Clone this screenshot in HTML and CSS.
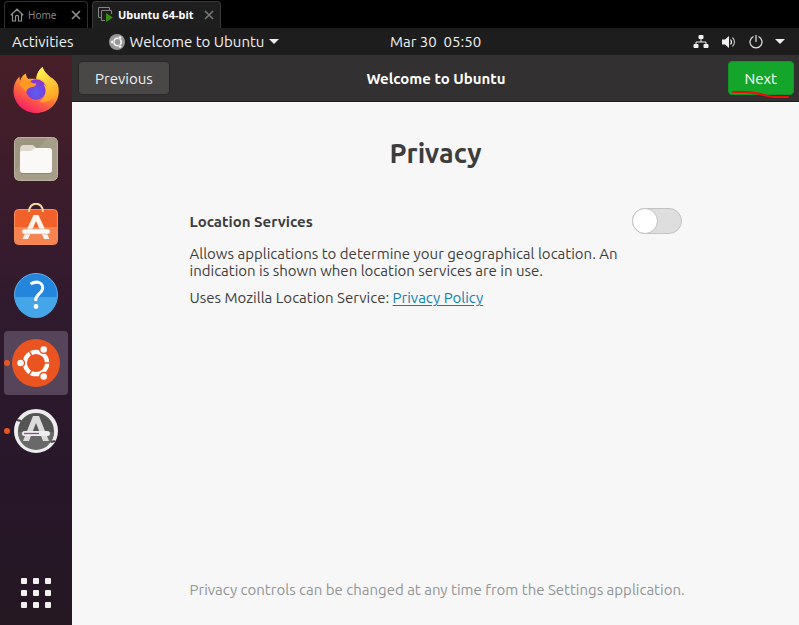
FILE: index.html
```html
<!DOCTYPE html>
<html lang="en">
<head>
<meta charset="utf-8">
<title>Welcome to Ubuntu</title>
<link rel="stylesheet" href="styles.css">
</head>
<body>
<nav class="tabs" aria-label="Virtual machines">
  <div class="tab">
    <svg width="14" height="14" viewBox="0 0 14 14" fill="none" stroke="#929292" stroke-width="1.2" aria-hidden="true"><path d="M.7 7.2 7 1.2l6.3 6M2.5 6v7h3V8.800a1.500 1.500 0 0 1 3 0V13h3V6"/></svg>
    <span class="tab-name">Home</span>
    <button class="close" aria-label="Close Home"><svg width="10" height="10" viewBox="0 0 10 10" stroke="#8c8c8c" stroke-width="1.700"><path d="m1 1 8 8M9 1 1 9"/></svg></button>
  </div>
  <div class="tab active">
    <svg width="16" height="16" viewBox="0 0 16 16" fill="none" stroke="#858585" aria-hidden="true"><path d="M3 10.500H.5V.5h11V3M7 13.500H3.500V3.500h10V7"/><path d="m8 6 7 4.500-7 4.500z" fill="#388e12" stroke="none"/></svg>
    <span class="tab-name">Ubuntu 64-bit</span>
    <button class="close" aria-label="Close Ubuntu 64-bit"><svg width="10" height="10" viewBox="0 0 10 10" stroke="#777" stroke-width="1.700"><path d="m1 1 8 8M9 1 1 9"/></svg></button>
  </div>
</nav>

<header class="topbar">
  <div class="topbar-left">
    <button class="plain">Activities</button>
    <button class="plain app-menu">
      <svg width="16" height="16" viewBox="0 0 16 16" aria-hidden="true"><circle cx="8" cy="8" r="8" fill="#989898"/><circle cx="8.500" cy="8" r="3.700" fill="none" stroke="#fff" stroke-width="1.600"/><g fill="#fff" stroke="#989898" stroke-width=".6"><circle cx="3.200" cy="8" r="1.600"/><circle cx="11" cy="3.500" r="1.600"/><circle cx="11" cy="12.500" r="1.600"/></g></svg>
      <span>Welcome to Ubuntu</span>
      <svg width="10" height="5" viewBox="0 0 10 5" aria-hidden="true"><path d="M0 0h10L5 5z" fill="#eee"/></svg>
    </button>
  </div>
  <button class="plain clock">Mar 30&nbsp; 05:50</button>
  <button class="plain status" aria-label="System menu">
    <svg width="16" height="14" viewBox="0 0 16 14"><path d="M8 4v3M3 10V7h10v3" fill="none" stroke="#f2f2f2"/><g fill="#f2f2f2"><rect x="5.500" width="5" height="4" rx="1"/><rect x=".5" y="9" width="5" height="4" rx="1"/><rect x="10.500" y="9" width="5" height="4" rx="1"/></g></svg>
    <svg width="16" height="14" viewBox="0 0 16 14"><path d="M1 4.500h3L8 1v12L4 9.500H1z" fill="#f2f2f2"/><path d="M9.500 4.500q2 2.500 0 5" fill="none" stroke="#f2f2f2" stroke-width="1.200"/><path d="M11.500 2.500q4 4.500 0 9" fill="none" stroke="#bbb" stroke-width="1.200"/></svg>
    <svg width="14" height="14" viewBox="0 0 14 14" fill="none" stroke="#e8e8e8" stroke-width="1.200"><path d="M4.500 1.500a6 6 0 1 0 5 0M7 0v7"/></svg>
    <svg width="10" height="5" viewBox="0 0 10 5"><path d="M0 0h10L5 5z" fill="#eee"/></svg>
  </button>
</header>

<div class="desktop">
  <nav class="dock" aria-label="Dock">
    <button class="launcher" aria-label="Firefox">
      <svg width="48" height="48" viewBox="0 0 48 48">
        <defs>
          <linearGradient id="ff" x1=".8" y1="0" x2=".25" y2="1"><stop offset="0" stop-color="#fff44f"/><stop offset=".3" stop-color="#ffc02c"/><stop offset=".6" stop-color="#ff7139"/><stop offset="1" stop-color="#f5156c"/></linearGradient>
          <radialGradient id="globe" cx=".5" cy=".65" r=".65"><stop offset="0" stop-color="#5b5ff2"/><stop offset=".6" stop-color="#7543df"/><stop offset="1" stop-color="#9530c9"/></radialGradient>
          <linearGradient id="flame" x1=".3" y1="0" x2=".8" y2="1"><stop offset="0" stop-color="#fff44f"/><stop offset="1" stop-color="#ff9b1f" stop-opacity=".8"/></linearGradient>
        </defs>
        <path d="M30.500 0c1 4 4.500 6.500 7 10l.4 3 1.600-2.300C44 14 47 18 46.700 24.500 46.500 37 36.500 46 24 46S1.500 36 1.500 24c0-6 2-11 6-14.500L8 14c1-3.500 2.800-6 6-7.500 0 2.500 1 4.500 2.500 5.500 3-.4 5 0 7.500 0C25 6.500 27 3 30.500 0z" fill="url(#ff)"/>
        <circle cx="24" cy="22.500" r="10.300" fill="url(#globe)"/>
        <path d="M30.500 0c-4 3-6 7-6 11 6 1 10 4.500 10.500 10-1-2-2-3-3.500-3.500 4 6 2 14-4.500 17.500 13 2 21-8 19-17C43 11 33 9 30.500 0z" fill="url(#flame)"/>
        <path d="M7 17c4-3 7-4 10.500-3.500 2 2.500 4 3 7 3.200-.5 2.300-2.500 3-5.500 3.500-4 1-4 3-5 5-2-3-4-5.500-7-8.200z" fill="#ff9a20"/>
      </svg>
    </button>
    <button class="launcher" aria-label="Files">
      <svg width="48" height="48" viewBox="0 0 48 48"><rect x="2.500" y="2.500" width="43" height="43" rx="5" fill="#9d957f" stroke="#bcb5a3"/><path d="M3 36 36 3h9v37q0 5-5 5H3z" fill="#b6b09e" opacity=".35"/><path d="M8 15q0-5 4-5h8q2 0 4 3h14v22H8z" fill="#ddd9cc"/><path d="M8 18q0-2 2-2h9l4-3h14q3 0 3 3v19q0 3-3 3H11q-3 0-3-3z" fill="#faf9f7"/><path d="M9 38.500h30" stroke="#817b6c" opacity=".6"/></svg>
    </button>
    <button class="launcher" aria-label="Ubuntu Software">
      <svg width="48" height="48" viewBox="0 0 48 48"><rect x="2.500" y="6.500" width="43" height="35" rx="4" fill="#f0622a" stroke="#f78d5b"/><path d="M3 24h42v13q0 4-4 4H7q-4 0-4-4z" fill="#f58450"/><path d="M17 9c0-11 14-11 14 0" fill="none" stroke="#f4dba2" stroke-width="2"/><path d="M21.500 12h5l11 24h-5.500l-8-18-8 18h-5.500z" fill="#fff3ec"/><rect x="10" y="26" width="28" height="5" rx="2.500" fill="#fff" stroke="#eaa387" stroke-width=".7"/></svg>
    </button>
    <button class="launcher" aria-label="Help">
      <svg width="48" height="48" viewBox="0 0 48 48"><circle cx="24" cy="24" r="21.500" fill="#2385dc" stroke="#61b0ec"/><path d="M3 26h42a21 21 0 0 1-42 0z" fill="#44a5e9"/><path d="M18.500 13c7-4 13-1 12 5-.7 5-7 5-7 12" fill="none" stroke="#fff" stroke-width="3"/><circle cx="24" cy="35.500" r="2.400" fill="#fff"/></svg>
    </button>
    <button class="launcher running current" aria-label="Welcome to Ubuntu">
      <svg width="48" height="48" viewBox="0 0 48 48"><circle cx="24" cy="24" r="24" fill="#e95420"/><circle cx="24" cy="24" r="11.200" fill="none" stroke="#fff" stroke-width="4.200"/><path d="m24 24-8-14M24 24l-8 14M24 24h16" stroke="#e95420" stroke-width="1.500"/><g fill="#fff" stroke="#e95420" stroke-width="1.500"><circle cx="8.500" cy="24" r="4"/><circle cx="31.700" cy="10.500" r="4"/><circle cx="31.700" cy="37.500" r="4"/></g></svg>
    </button>
    <button class="launcher running" aria-label="Software Updater">
      <svg width="48" height="48" viewBox="0 0 48 48"><circle cx="24" cy="24" r="20" fill="#555" stroke="#ededed" stroke-width="4"/><path d="M6 25h36a18 18 0 0 1-36 0z" fill="#696969"/><path d="m5 13 4 1M39 35l4-1" stroke="#444" stroke-width="2"/><path d="m8 9 5-2-3 5zM38 36l-4 5 5-2z" fill="#ededed"/><path d="M21 9h6l10 25h-6l-7-18-7 18h-6z" fill="#dcdcdc"/><rect x="10" y="24" width="28" height="5" rx="2.500" fill="#ededed"/><path d="M12 26.500h15" stroke="#924a91" stroke-width="1.300"/></svg>
    </button>
    <button class="launcher apps" aria-label="Show Applications">
      <svg width="30" height="30" viewBox="0 0 30 30" fill="#f2f1ef"><rect width="6" height="6" rx="1"/><rect x="12" width="6" height="6" rx="1"/><rect x="24" width="6" height="6" rx="1"/><rect y="12" width="6" height="6" rx="1"/><rect x="12" y="12" width="6" height="6" rx="1"/><rect x="24" y="12" width="6" height="6" rx="1"/><rect y="24" width="6" height="6" rx="1"/><rect x="12" y="24" width="6" height="6" rx="1"/><rect x="24" y="24" width="6" height="6" rx="1"/></svg>
    </button>
  </nav>

  <section class="window">
    <header class="titlebar">
      <div><button class="btn">Previous</button></div>
      <h1 class="title">Welcome to Ubuntu</h1>
      <div class="next-wrap">
        <button class="btn next">Next</button>
        <svg class="scribble" width="58" height="10" viewBox="0 0 58 10" aria-hidden="true"><path d="M1 2h12c15 0 20 5 32 5h11" fill="none" stroke="#f00a0a" stroke-width="2" stroke-linecap="round"/></svg>
      </div>
    </header>
    <main class="page">
      <h2 class="heading">Privacy</h2>
      <div class="setting">
        <label class="setting-name" for="location">Location Services</label>
        <input class="switch" type="checkbox" role="switch" id="location">
      </div>
      <p class="text">Allows applications to determine your geographical location. An indication is shown when location services are in use.</p>
      <p class="text">Uses Mozilla Location Service: <a href="#privacy-policy">Privacy Policy</a></p>
      <p class="footnote">Privacy controls can be changed at any time from the Settings application.</p>
    </main>
  </section>
</div>
</body>
</html>
```

FILE: styles.css
```css
*,
*::before {
  box-sizing: border-box;
}

body {
  margin: 0;
  min-height: 100vh;
  display: flex;
  flex-direction: column;
  background: #000;
  color: #3d3d3d;
  font: 15px/17px Ubuntu, "Noto Sans", sans-serif;
}

button {
  font: inherit;
  color: inherit;
  background: none;
  border: 0;
  padding: 0;
}

svg {
  display: block;
  flex: none;
}

h1, h2, p {
  margin: 0;
}

.tabs {
  display: flex;
  gap: 4px;
  height: 28px;
  padding: 1px 4px 0;
  font: 10px/16px "Noto Sans", sans-serif;
  color: #858585;
}

.tab {
  display: flex;
  align-items: center;
  gap: 4px;
  min-width: 84px;
  padding: 0 6px 0 5px;
  border: 1px solid #303030;
  border-bottom: 0;
  border-radius: 4px 4px 0 0;
}

.tab.active {
  min-width: 129px;
  background: #1e1e1e;
  border-color: #3a3a3a;
  color: #fff;
  font-size: 11px;
  font-weight: 700;
}

.close {
  margin-left: auto;
}

.topbar {
  display: grid;
  grid-template-columns: minmax(0, 1fr) auto minmax(0, 1fr);
  align-items: center;
  height: 27px;
  padding: 0 14px 0 86px;
  background: #1d1d1d;
  color: #f2f2f2;
}

.topbar-left,
.app-menu,
.status {
  display: flex;
  align-items: center;
}

/* The clock is centred beside the dock; this group starts above it. */
.topbar-left {
  gap: 35px;
  margin-left: -74px;
  white-space: nowrap;
}

.app-menu {
  gap: 5px;
}

.status {
  justify-self: end;
  gap: 12px;
}

.desktop {
  flex: 1;
  display: flex;
}

.dock {
  flex: none;
  width: 72px;
  display: flex;
  flex-direction: column;
  align-items: center;
  gap: 4px;
  padding-top: 4px;
  background: linear-gradient(#471f27, #3b1c2c 25%, #301a2e 45%, #271629 75%, #241822);
}

.launcher {
  position: relative;
  display: grid;
  place-items: center;
  width: 64px;
  height: 64px;
  border-radius: 4px;
}

.launcher.current {
  background: #55445a;
}

.launcher.running::before {
  content: "";
  position: absolute;
  left: 0;
  top: 29px;
  width: 6px;
  height: 6px;
  border-radius: 50%;
  background: #e95420;
}

.launcher.apps {
  margin-top: auto;
}

.window {
  flex: 1;
  min-width: 0;
  display: flex;
  flex-direction: column;
  background: #f7f7f7;
}

.titlebar {
  display: grid;
  grid-template-columns: 1fr auto 1fr;
  align-items: center;
  height: 47px;
  padding: 0 5px 0 6px;
  background: #323030;
  border-bottom: 1px solid #1c1b1b;
}

.title {
  font-size: 15px;
  line-height: 17px;
  color: #fff;
}

.btn {
  height: 34px;
  padding: 0 16px;
  border: 1px solid #292727;
  border-radius: 4px;
  background: #4a4846;
  color: #f0f0f0;
}

.next-wrap {
  position: relative;
  justify-self: end;
}

.btn.next {
  border-color: #129528;
  background: #14a52b;
  color: #fff;
}

.scribble {
  position: absolute;
  right: 4px;
  bottom: -5px;
}

.page {
  flex: 1;
  display: flex;
  flex-direction: column;
  width: 100%;
  max-width: 492px;
  margin: 0 auto;
  padding: 34px 0 27px;
}

.heading {
  margin-bottom: 38px;
  text-align: center;
  font-size: 27px;
  line-height: 34px;
}

.setting {
  display: flex;
  align-items: center;
  justify-content: space-between;
  margin-bottom: 11px;
}

.setting-name {
  font-weight: 700;
}

.switch {
  appearance: none;
  flex: none;
  display: flex;
  width: 50px;
  height: 26px;
  margin: 0;
  border: 1px solid #c2c2c2;
  border-radius: 13px;
  background: #dedede;
}

.switch::before {
  content: "";
  flex: none;
  width: 26px;
  height: 26px;
  margin: -1px;
  border: 1px solid #c2c2c2;
  border-radius: 50%;
  background: #fff;
}

.switch:checked {
  background: #14a52b;
}

.switch:checked::before {
  margin-left: 23px;
}

.text {
  max-width: 440px;
  margin-bottom: 10px;
}

.text a {
  color: #0d81ae;
  text-underline-offset: 2px;
}

.footnote {
  margin-top: auto;
  white-space: nowrap;
  color: #929595;
}
```
